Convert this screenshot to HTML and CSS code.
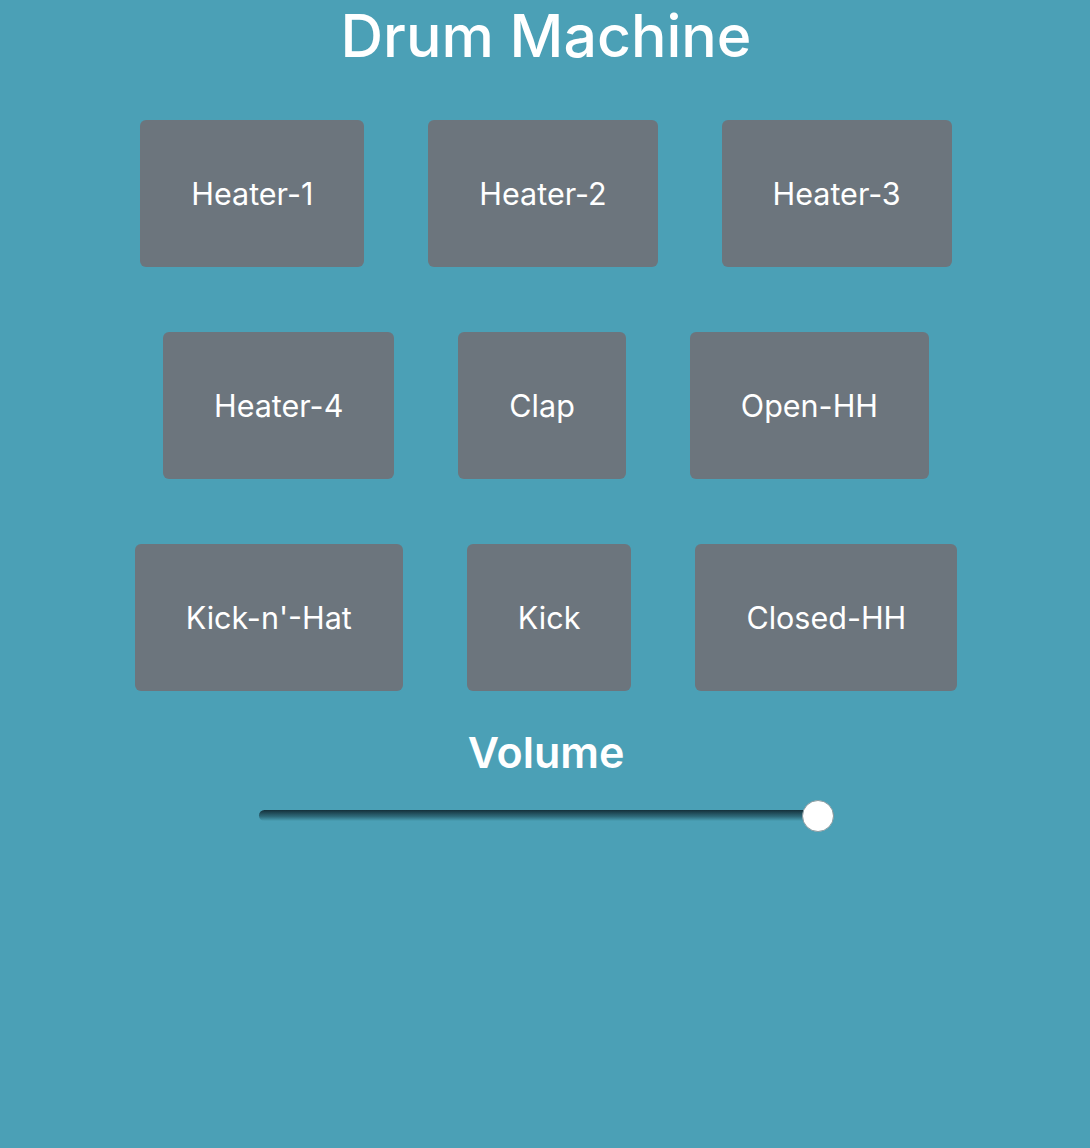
FILE: index.html
```html
<!DOCTYPE html>
<html lang="en">
<head>
<meta charset="utf-8">
<title>Drum Machine</title>
<link rel="stylesheet" href="styles.css">
</head>
<body>
<main class="app">
  <h1 class="title">Drum Machine</h1>
  <div class="pads">
    <div class="pad-row">
      <button class="pad">Heater-1</button>
      <button class="pad">Heater-2</button>
      <button class="pad">Heater-3</button>
    </div>
    <div class="pad-row">
      <button class="pad">Heater-4</button>
      <button class="pad">Clap</button>
      <button class="pad">Open-HH</button>
    </div>
    <div class="pad-row">
      <button class="pad">Kick-n'-Hat</button>
      <button class="pad">Kick</button>
      <button class="pad">Closed-HH</button>
    </div>
  </div>
  <div class="volume">
    <h2 class="volume-label">Volume</h2>
    <input class="volume-slider" type="range" min="0" max="1" step="0.01" value="1">
  </div>
</main>
</body>
</html>
```
FILE: styles.css
```css
html, body {
  margin: 0;
  padding: 0;
}
body {
  background: #4ba0b6;
  color: #fff;
  font-family: Inter, "Noto Sans", "Liberation Sans", sans-serif;
  min-height: 1148px;
}
.app {
  display: flex;
  flex-direction: column;
  align-items: center;
  padding-left: 2px;
}
.title {
  margin: 0;
  font-size: 59px;
  font-weight: 500;
  line-height: 72px;
  letter-spacing: 0;
}
.pads {
  margin-top: 48px;
  display: flex;
  flex-direction: column;
  gap: 65px;
}
.pad-row {
  display: flex;
  justify-content: center;
  gap: 64px;
}
.pad {
  height: 147px;
  padding: 0 51px;
  border: none;
  border-radius: 6px;
  background: #6c757d;
  color: #fff;
  font-family: inherit;
  font-size: 30.5px;
  font-weight: 400;
}
.volume {
  display: flex;
  flex-direction: column;
  align-items: center;
  margin-top: 30px;
}
.volume-label {
  margin: 0;
  font-size: 43px;
  font-weight: 600;
  line-height: 62px;
}
.volume-slider {
  -webkit-appearance: none;
  appearance: none;
  width: 575px;
  height: 32px;
  margin: 16px 0 0 0;
  background: transparent;
}
.volume-slider::-webkit-slider-runnable-track {
  height: 11px;
  border-radius: 6px;
  background: linear-gradient(#14303a, #2f6b7b 60%, #4aa0b5);
}
.volume-slider::-webkit-slider-thumb {
  -webkit-appearance: none;
  appearance: none;
  width: 32px;
  height: 32px;
  border-radius: 50%;
  background: #fff;
  border: 1px solid #8a9ba0;
  box-sizing: border-box;
  margin-top: -10px;
}
```
